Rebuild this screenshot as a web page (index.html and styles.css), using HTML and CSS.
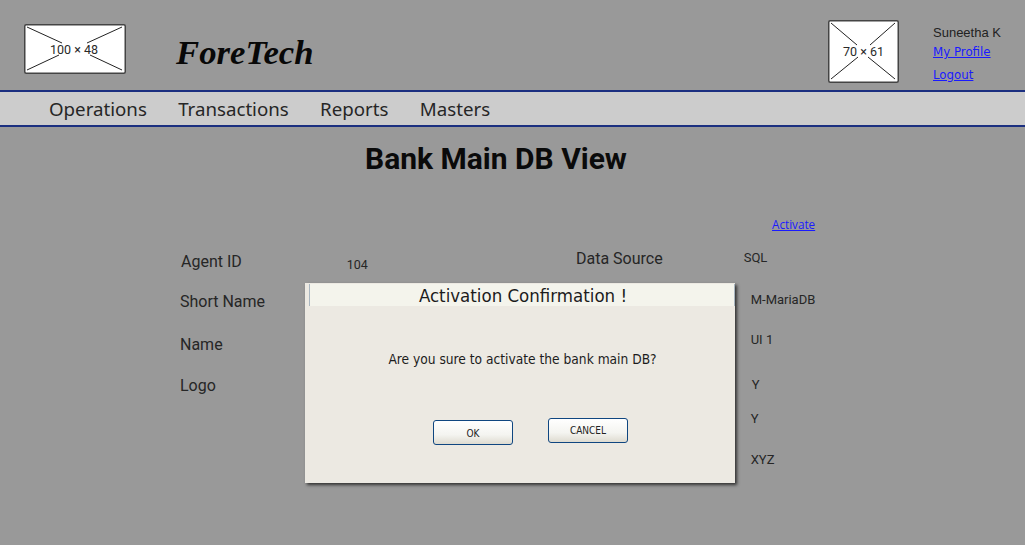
FILE: index.html
```html
<!DOCTYPE html>
<html lang="en">
<head>
<meta charset="utf-8">
<title>Bank Main DB View</title>
<link rel="stylesheet" href="styles.css">
</head>
<body>
<header class="top">
  <svg class="ph ph-logo" width="102" height="50" viewBox="0 0 102 50">
    <rect x="0.75" y="0.75" width="100.5" height="48.5" rx="1.5" fill="#fff" stroke="#444" stroke-width="1.5"/>
    <path d="M3 3 L38 19 M98 3 L63 19 M3 46 L35 31 M98 46 L66 31" stroke="#222" fill="none"/>
    <text x="50" y="30" text-anchor="middle" class="ph-text">100 × 48</text>
  </svg>
  <div class="brand">ForeTech</div>
  <svg class="ph ph-user" width="71" height="63" viewBox="0 0 71 63">
    <rect x="0.75" y="0.75" width="69.5" height="61.5" rx="1.5" fill="#fff" stroke="#444" stroke-width="1.5"/>
    <path d="M3 3 L29 25 M67 3 L42 25 M3 59 L30 37 M67 59 L40 37" stroke="#222" fill="none"/>
    <text x="35.5" y="36" text-anchor="middle" class="ph-text">70 × 61</text>
  </svg>
  <div class="user">
    <div class="user-name">Suneetha K</div>
    <a class="user-link" href="#">My Profile</a>
    <a class="user-link" href="#">Logout</a>
  </div>
</header>
<nav class="nav">
  <a href="#">Operations</a>
  <a href="#">Transactions</a>
  <a href="#">Reports</a>
  <a href="#">Masters</a>
</nav>
<main class="main">
  <h1 class="title">Bank Main DB View</h1>
  <div class="action"><a href="#">Activate</a></div>
  <div class="form">
    <div class="col-left">
      <div class="row row-agent"><span class="label">Agent ID</span><span class="value">104</span></div>
      <div class="row row-short"><span class="label">Short Name</span></div>
      <div class="row row-name"><span class="label">Name</span></div>
      <div class="row row-logo"><span class="label">Logo</span></div>
    </div>
    <div class="col-right">
      <span class="label">Data Source</span>
      <div class="values">
        <span class="v v1">SQL</span>
        <span class="v v2">M-MariaDB</span>
        <span class="v v3">UI 1</span>
        <span class="v v4">Y</span>
        <span class="v v5">Y</span>
        <span class="v v6">XYZ</span>
      </div>
    </div>
  </div>
</main>
<div class="dialog">
  <div class="dialog-title">Activation Confirmation !</div>
  <p class="dialog-text">Are you sure to activate the bank main DB?</p>
  <div class="dialog-actions">
    <button class="btn btn-ok">OK</button>
    <button class="btn btn-cancel">CANCEL</button>
  </div>
</div>
</body>
</html>
```
FILE: styles.css
```css
* { box-sizing: border-box; }
html, body { margin: 0; height: 100%; }
body {
  background: #999;
  color: #1c1c1c;
  font-family: "Roboto", sans-serif;
  overflow: hidden;
  position: relative;
}
.top {
  height: 90px;
  display: flex;
  align-items: flex-start;
}
.ph { display: block; flex: none; }
.ph-logo { margin: 24px 0 0 24px; }
.ph-user { margin: 20px 0 0 502px; }
.ph-text { font: 12.5px "Roboto", sans-serif; fill: #2a2a2a; }
.brand {
  margin: 31px 0 0 50px;
  width: 150px;
  font: italic bold 34.7px/44px "Liberation Serif", serif;
  color: #080808;
}
.user { margin: 24px 0 0 34px; display: flex; flex-direction: column; }
.user-name { font: 13px/17px "Liberation Sans", sans-serif; color: #222; }
.user-link {
  font: 11.8px/16px "DejaVu Sans", sans-serif;
  color: #1a1aff;
  margin-top: 3px;
}
.user-link + .user-link { margin-top: 7px; }
.nav {
  height: 37px;
  background: #ccc;
  border-top: 2px solid #1b2f80;
  border-bottom: 2px solid #1b2f80;
  display: flex;
  gap: 31.3px;
  padding: 0 0 0 49px;
  align-items: center;
}
.nav a {
  font: 18.7px/25px "Noto Sans", sans-serif;
  color: #262626;
  text-decoration: none;
}
.main { position: relative; }
.title {
  margin: 14px 0 0 365px;
  font: bold 30px/36px "Roboto", sans-serif;
  color: #0a0a0a;
}
.action {
  margin: 39px 0 0 772px;
  font: 11.7px/16px "Open Sans", sans-serif;
}
.action a { color: #1a1aff; }
.form { display: flex; margin-top: 11px; }
.col-left { width: 576px; padding-left: 180px; }
.row { display: flex; align-items: center; height: 20px; }
.label { font-size: 16px; line-height: 20px; color: #262626; }
.row-agent { padding-left: 1px; margin-top: 9px; }
.row-short { margin-top: 20px; }
.row-name { margin-top: 23px; }
.row-logo { margin-top: 21px; }
.value { margin-left: 105px; font-size: 12.5px; padding-top: 4px; color: #262626; }
.col-right { display: flex; align-items: flex-start; padding-top: 6px; }
.values { display: flex; flex-direction: column; margin-left: 81px; padding-top: 1px; font: 13px/16px "Roboto", sans-serif; color: #262626; }
.v { display: block; }
.v2, .v3, .v5, .v6 { margin-left: 7px; }
.v4 { margin-left: 8px; }
.v2 { margin-top: 26px; }
.v3 { margin-top: 24px; }
.v4 { margin-top: 29px; }
.v5 { margin-top: 18px; }
.v6 { margin-top: 25px; }
.dialog {
  position: absolute;
  left: 305px;
  top: 283px;
  width: 430px;
  height: 200px;
  background: #ece9e2;
  box-shadow: 2px 2px 3px #333;
  font-family: "DejaVu Sans Condensed", "Noto Sans", sans-serif;
}
.dialog-title {
  margin: 1px 0 0 4px;
  height: 22px;
  width: 426px;
  padding: 1px 0 0 2px;
  background: #f4f4ec;
  border-left: 1px solid #a9b6c0;
  border-right: 1px solid #a9b6c0;
  text-align: center;
  font-size: 18.5px;
  line-height: 22px;
  color: #1c1c1c;
}
.dialog-text {
  margin: 44px 0 0;
  padding-left: 5px;
  text-align: center;
  font-size: 13.65px;
  line-height: 18px;
  color: #1c1c1c;
}
.dialog-actions { display: flex; align-items: flex-start; margin: 38px 0 0 128px; gap: 35px; }
.btn {
  width: 80px;
  height: 25px;
  border: 1px solid #0f4680;
  border-radius: 3px;
  background: linear-gradient(#fff, #f4f4f0 60%, #dedbd0);
  font: 10px/14px "DejaVu Sans Condensed", "Noto Sans", sans-serif;
  color: #222;
  padding: 0;
}
.btn-ok { margin-top: 14px; padding-top: 2px; }
.btn-cancel { margin-top: 12px; padding-top: 1px; }
```
